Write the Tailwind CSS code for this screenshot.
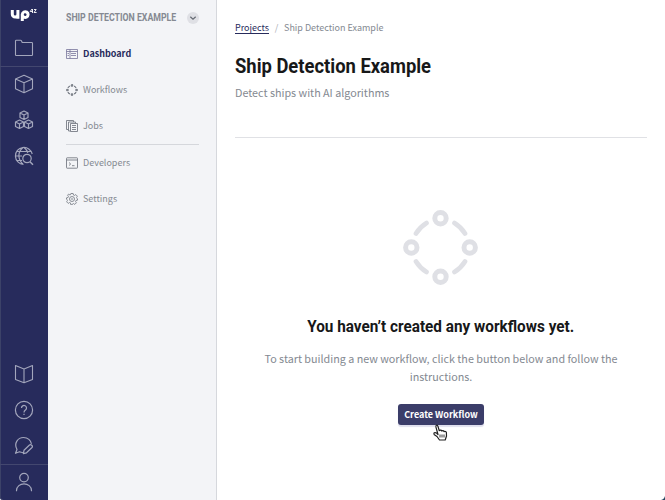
<!DOCTYPE html>
<html lang="en">
<head>
<meta charset="utf-8">
<title>Ship Detection Example</title>
<script src="https://cdn.jsdelivr.net/npm/@tailwindcss/browser@4"></script>
</head>
<body class="relative flex h-[500px] w-[665px] overflow-hidden bg-white font-['Noto_Sans_CJK_SC',sans-serif] text-[#848991]">
<nav class="flex h-full w-12 shrink-0 flex-col items-center rounded-bl-[3px] bg-[#272b5c] text-[#a3a6bc] shadow-[inset_1px_0_0_#3c4268]">
  <div class="flex h-[29px] w-full items-start pl-[10px] pt-[7px] text-white">
    <svg class="h-[15px] w-[29px]" viewBox="0 0 29 15" fill="none" stroke="currentColor" stroke-width="3"><path d="M2.300 3v4.300a2.800 2.800 0 0 0 5.600 0V3v8.800M12.300 14V7.300a2.900 2.900 0 1 1 0 .6"/><path d="m22 2-1.800 2.500H23M22.500 2v4M24 2.500h2.200L24 5.500h2.600" stroke-width=".9"/></svg>
  </div>
  <div class="flex h-[38px] w-full items-center justify-center border-b border-[#43476f]">
    <svg class="h-5 w-5" viewBox="0 0 20 20" fill="none" stroke="currentColor" stroke-width="1.100" stroke-linejoin="round"><path d="M1.500 17V3q0-.8.8-.8h4.200q.6 0 .9.600l.8 1.700h9.500q.8 0 .8.800V16.700q0 .8-.8.8H2.300q-.8 0-.8-.8Z"/></svg>
  </div>
  <div class="flex h-[35px] items-center pb-px"><svg class="h-5 w-5" viewBox="0 0 20 20" fill="none" stroke="currentColor" stroke-width="1.100" stroke-linejoin="round"><path d="m10 1.300 8.500 3.700v9.700L10 18.700 1.500 14.700V5ZM1.500 5 10 8.800 18.500 5M10 8.800v9.900"/></svg></div>
  <div class="flex h-9 items-center"><svg class="h-5 w-5" viewBox="0 0 20 20" fill="none" stroke="currentColor" stroke-width="1.200" stroke-linejoin="round"><path id="cube" d="m10 1 4 2v4.500l-4 2-4-2V3ZM6 3l4 2 4-2M10 5v4.500"/><use href="#cube" x="-4.500" y="9"/><use href="#cube" x="4.500" y="9"/></svg></div>
  <div class="flex h-9 items-center"><svg class="h-5 w-5" viewBox="0 0 20 20" fill="none" stroke="currentColor" stroke-width="1.200"><path d="M9.500 18.400A8.500 8.500 0 1 1 18.200 8M9 18.400C3.500 13 3.500 6 9 1.500M10 1.500c2 1.500 3.300 3.200 3.800 5.300M2.500 5.500h14.800M1.500 10H8M2.500 14.500H8"/><circle cx="13" cy="12.500" r="4.200"/><path d="m16 15.700 3 3" stroke-width="1.500"/></svg></div>
  <div class="mt-auto flex h-9 items-center"><svg class="h-5 w-5" viewBox="0 0 20 20" fill="none" stroke="currentColor" stroke-width="1.100" stroke-linejoin="round"><path d="M10 5 1.500 1.500v14L10 18.700l8.500-3.200v-14ZM10 5v13.700"/></svg></div>
  <div class="flex h-9 items-center"><svg class="h-5 w-5" viewBox="0 0 20 20" fill="none" stroke="currentColor" stroke-width="1.200"><circle cx="10" cy="10" r="8.600"/><path d="M7.500 8a2.500 2.500 0 1 1 4 2c-1 .7-1.500 1-1.500 2.500M10 13.700V15"/></svg></div>
  <div class="flex h-9 items-center"><svg class="h-5 w-5" viewBox="0 0 20 20" fill="none" stroke="currentColor" stroke-width="1.200" stroke-linejoin="round" stroke-linecap="round"><path d="M8.500 16.500q-1.500 0-3-.7l-4 1.500 1.500-3.800C-.5 7 4 1.500 9.500 1.500c4.500 0 7.300 3 7.800 6M9.300 17.700l.7-3.400 5.500-5.300c1.300-1.200 3.800 1 2.500 2.500l-5.500 5.300Z"/></svg></div>
  <div class="flex h-9 w-full items-center justify-center border-t border-[#43476f] pb-px"><svg class="h-5 w-5" viewBox="0 0 20 20" fill="none" stroke="currentColor" stroke-width="1.200" stroke-linecap="round"><circle cx="10" cy="5.600" r="4.300"/><path d="M2.500 18.700c0-9 15-9 15 0"/></svg></div>
</nav>
<aside class="h-full w-[169px] shrink-0 border-r border-[#d6d8dd] bg-[#f3f4f7] pl-[18px] pr-[17px] text-[9px]">
  <div class="flex h-9 items-center justify-between">
    <h2 class="w-[111px] whitespace-nowrap font-[Roboto] text-[10px] font-bold leading-4 text-[#858992]"><span class="inline-block origin-left scale-x-[.875]">SHIP DETECTION EXAMPLE</span></h2>
    <svg class="h-3 w-3" viewBox="0 0 12 12" fill="none"><circle cx="6" cy="6" r="6" fill="#dfe0e5"/><path d="m3.300 4.800 2.700 2.500 2.700-2.500" stroke="#656a73" stroke-width="1.200"/></svg>
  </div>
  <ul>
    <li class="flex h-9 items-center gap-[5px] font-bold text-[#272b5c]"><svg class="h-3 w-3" viewBox="0 0 12 12" fill="none" stroke="#77759a"><path d="M.5 1.500h11v9H.5ZM.5 3.500h11M4 1.500v9M1.500 5.500H3M1.500 7.500H3M5 5.500h5M5 7.500h5" stroke-width=".8"/></svg><span class="leading-4">Dashboard</span></li>
    <li class="flex h-9 items-center gap-[5px]"><svg class="h-3 w-3" viewBox="0 0 76 76" fill="none" stroke="#747982" stroke-width="7"><circle cx="38" cy="9" r="5"/><circle cx="38" cy="67" r="5"/><circle cx="9" cy="38" r="5"/><circle cx="67" cy="38" r="5"/><path d="M25 12q-9 4-13 13M51 12q9 4 13 13M12 51q4 9 13 13M64 51q-4 9-13 13"/></svg><span class="leading-4">Workflows</span></li>
    <li class="flex h-9 items-center gap-[5px]"><svg class="h-3 w-3" viewBox="0 0 12 12" fill="none" stroke="#777c85" stroke-width=".9"><path d="M2.500 9.500H.5v-9h7V2M4.500 11H2.500V2h7v1.500M4.500 3.500h7v8h-7ZM6 5.500h4M6 7.500h4M6 9.500h4"/></svg><span class="leading-4">Jobs</span></li>
    <li class="h-px bg-[#d5d7dc]"></li>
    <li class="flex h-9 items-center gap-[5px]"><svg class="h-3 w-3" viewBox="0 0 12 12" fill="none" stroke="#777c85" stroke-width=".9"><rect x=".5" y=".8" width="11" height="10.400" rx=".6"/><path d="M.5 3h11M3 5.500l1.700 1.500L3 8.500M6 8.700h2.500"/></svg><span class="leading-4">Developers</span></li>
    <li class="flex h-9 items-center gap-[5px]"><svg class="h-3 w-3" viewBox="0 0 24 24" fill="none" stroke="#777c85" stroke-width="1.700" stroke-linejoin="round"><path d="M9.700 1h4.600l.7 3.100 1.900.8L19.600 3.200l3.200 3.200-1.700 2.700.8 1.900 1.100.7v2.600l-3.100.7-.8 1.900 1.700 2.700-3.200 3.200-2.700-1.700-1.900.8-.7 1.700H9.700L9 19.900l-1.900-.8-2.700 1.700-3.200-3.200 1.700-2.700-.8-1.900L1 12.300V9.700L4.100 9l.8-1.900L3.200 4.400l2-2.200 2.700 1.700L9 3.500Z"/><circle cx="12" cy="12" r="5"/><circle cx="12" cy="12" r="1.500" stroke-width="1"/></svg><span class="leading-4">Settings</span></li>
  </ul>
</aside>
<main class="flex min-w-0 flex-1 flex-col px-[18px]">
  <header class="h-[138px] border-b border-[#e0e1e5]">
    <nav class="flex pt-5 text-[9px] leading-4"><a class="text-[#272b5c] underline underline-offset-2">Projects</a><span class="w-[15px] text-center text-[#a7abb2]">/</span><span>Ship Detection Example</span></nav>
    <h1 class="mt-4 h-7 whitespace-nowrap font-[Roboto] text-[21px] font-bold leading-7 text-[#171819]"><span class="inline-block origin-left scale-x-[.876]">Ship Detection Example</span></h1>
    <p class="mt-1 text-[10.75px] leading-[18px]">Detect ships with AI algorithms</p>
  </header>
  <section class="flex flex-col items-center pt-[71px] text-center">
    <svg class="mr-px h-[77px] w-[77px]" viewBox="0 0 77 77" fill="none" stroke="#dfe0e5" stroke-width="5"><circle cx="38.500" cy="9.300" r="5.700"/><circle cx="38.500" cy="67.700" r="5.700"/><circle cx="9.300" cy="38.500" r="5.700"/><circle cx="67.700" cy="38.500" r="5.700"/><path stroke-width="4.700" stroke-linecap="round" d="M24.500 14q-6.500 4-10.500 10.500M52.500 14q6.500 4 10.500 10.500M14 52.500q4 6.500 10.500 10.500M63 52.500q-4 6.500-10.500 10.500"/></svg>
    <h2 class="mt-[26px] h-7 whitespace-nowrap font-[Roboto] text-[17.4px] font-bold leading-7 text-[#171819]"><span class="inline-block scale-x-[.88]">You haven’t created any workflows yet.</span></h2>
    <p class="mt-[10px] whitespace-nowrap text-[10.75px] leading-[18px]">To start building a new workflow, click the button below and follow the<br>instructions.</p>
    <button class="mt-[18px] h-[21px] w-[86px] whitespace-nowrap rounded-[3px] bg-[#3b3d69] text-[9px] font-bold leading-[21px] text-white shadow-[0_2px_1px_#dfdfed]">Create Workflow</button>
  </section>
</main>
<svg class="absolute left-[432px] top-[424px] h-[18px] w-[18px]" viewBox="0 0 18 18" fill="white" stroke="#202020" stroke-width="1.200" stroke-linejoin="round"><path d="M6 10.500 4 3.300C3.300 1 5.300.5 6 2.500L7.300 6.700c.7-.8 2-.7 2.500.3.700-.6 1.800-.4 2.200.6 1-.5 2.200.1 2.400 1l.1 3.400-1.300 4H7.500L5 12.500 2.400 10.800C1 9 3 8 4.300 8.900Z"/><path d="M8 10.500v3M10 10.500v3M12 10.500v3" stroke-width=".9"/></svg>
<svg class="absolute bottom-0 right-0 h-1 w-1" viewBox="0 0 4 4"><path d="M4 0v4H0q3-.5 4-4" fill="#294761"/></svg>
</body>
</html>
